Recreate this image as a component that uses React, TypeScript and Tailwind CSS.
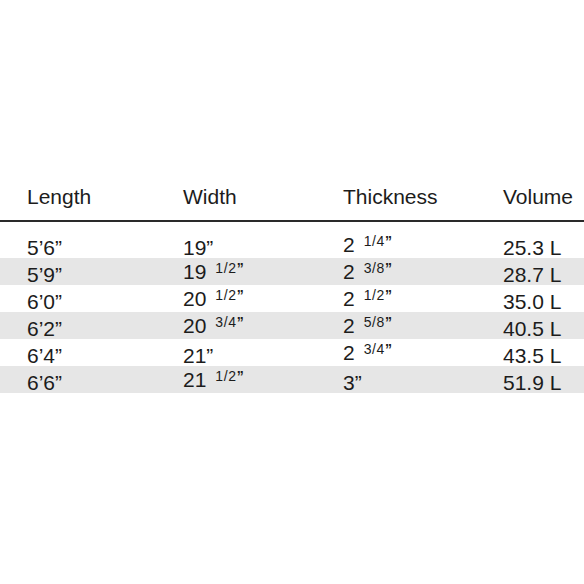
import React from "react";

type Cell = { whole: string; frac?: string };

const rows: { len: string; width: Cell; thick: Cell; vol: string }[] = [
  { len: "5’6”", width: { whole: "19”" }, thick: { whole: "2", frac: "1/4" }, vol: "25.3 L" },
  { len: "5’9”", width: { whole: "19", frac: "1/2" }, thick: { whole: "2", frac: "3/8" }, vol: "28.7 L" },
  { len: "6’0”", width: { whole: "20", frac: "1/2" }, thick: { whole: "2", frac: "1/2" }, vol: "35.0 L" },
  { len: "6’2”", width: { whole: "20", frac: "3/4" }, thick: { whole: "2", frac: "5/8" }, vol: "40.5 L" },
  { len: "6’4”", width: { whole: "21”" }, thick: { whole: "2", frac: "3/4" }, vol: "43.5 L" },
  { len: "6’6”", width: { whole: "21", frac: "1/2" }, thick: { whole: "3”" }, vol: "51.9 L" },
];

function Val({ c }: { c: Cell }) {
  return (
    <span className="leading-[21px]">
      {c.whole}
      {c.frac && (
        <span className="relative top-[-6px] ml-[9px] text-[14px] tracking-[0.6px]">
          {c.frac}
          <span className="font-bold">”</span>
        </span>
      )}
    </span>
  );
}

export default function App() {
  return (
    <div
      className="w-[584px] h-[584px] bg-white text-[#1c1c1c] text-[21px] overflow-hidden"
      style={{ fontFamily: '"Liberation Sans", Arial, Helvetica, sans-serif' }}
    >
      <div className="pt-[186px]">
        <div className="grid grid-cols-[156px_160px_160px_1fr] pl-[27px] leading-[21px] h-[36px] border-b-2 border-[#2a2a2a]">
          <div>Length</div>
          <div>Width</div>
          <div>Thickness</div>
          <div>Volume</div>
        </div>
        <div className="h-[9px]" />
        {rows.map((r, i) => (
          <div
            key={i}
            className={`grid grid-cols-[156px_160px_160px_1fr] pl-[27px] h-[27px] items-end ${
              i % 2 === 1 ? "bg-[#e6e6e6]" : "bg-white"
            }`}
          >
            <div className="leading-[21px]">{r.len}</div>
            <div className="leading-[21px]">
              <Val c={r.width} />
            </div>
            <div className="leading-[21px]">
              <Val c={r.thick} />
            </div>
            <div className="leading-[21px]">{r.vol}</div>
          </div>
        ))}
      </div>
    </div>
  );
}
